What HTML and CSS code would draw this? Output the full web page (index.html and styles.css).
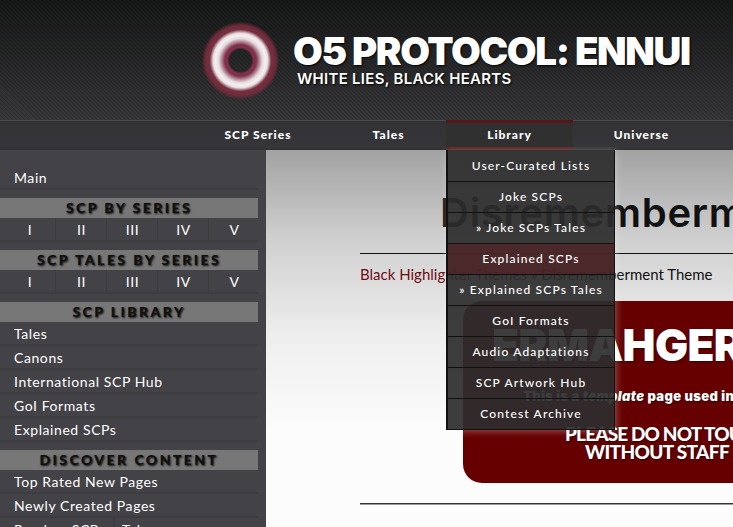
FILE: index.html
```html
<!DOCTYPE html>
<html lang="en">
<head>
<meta charset="utf-8">
<title>O5 Protocol: Ennui</title>
<link rel="stylesheet" href="styles.css">
</head>
<body>
<header class="header">
  <svg class="logo" viewBox="0 0 76 76" aria-hidden="true">
    <defs>
      <radialGradient id="ring" gradientUnits="userSpaceOnUse" cx="38" cy="38" r="38">
        <stop offset=".29" stop-color="#80304a" stop-opacity="0"/>
        <stop offset=".34" stop-color="#80304a"/>
        <stop offset=".41" stop-color="#80304a"/>
        <stop offset=".57" stop-color="#e5dadd"/>
        <stop offset=".65" stop-color="#f3f0f2"/>
        <stop offset=".71" stop-color="#e8dde1"/>
        <stop offset=".80" stop-color="#75303f"/>
        <stop offset=".91" stop-color="#702b3a"/>
        <stop offset="1" stop-color="#702b3a" stop-opacity=".1"/>
      </radialGradient>
    </defs>
    <circle cx="38" cy="38" r="38" fill="url(#ring)"/>
  </svg>
  <div class="brand">
    <h1 class="brand-name">O5 PROTOCOL: ENNUI</h1>
    <p class="brand-sub">WHITE LIES, BLACK HEARTS</p>
  </div>
</header>
<nav class="nav">
  <a class="tab tab-series">SCP Series</a>
  <a class="tab tab-tales">Tales</a>
  <div class="tab tab-library">Library
    <div class="menu">
      <a>User-Curated Lists</a>
      <a>Joke SCPs</a>
      <a>» Joke SCPs Tales</a>
      <a class="active">Explained SCPs</a>
      <a>» Explained SCPs Tales</a>
      <a>GoI Formats</a>
      <a>Audio Adaptations</a>
      <a>SCP Artwork Hub</a>
      <a>Contest Archive</a>
    </div>
  </div>
  <a class="tab tab-universe">Universe</a>
</nav>
<div class="layout">
  <aside class="side">
    <a class="link">Main</a>
    <h2>SCP BY SERIES</h2>
    <div class="series"><a>I</a><a>II</a><a>III</a><a>IV</a><a>V</a></div>
    <h2>SCP TALES BY SERIES</h2>
    <div class="series"><a>I</a><a>II</a><a>III</a><a>IV</a><a>V</a></div>
    <h2>SCP LIBRARY</h2>
    <a class="link">Tales</a>
    <a class="link">Canons</a>
    <a class="link">International SCP Hub</a>
    <a class="link">GoI Formats</a>
    <a class="link">Explained SCPs</a>
    <h2>DISCOVER CONTENT</h2>
    <a class="link">Top Rated New Pages</a>
    <a class="link">Newly Created Pages</a>
    <div class="random"><a>Random SCP</a><a>Tale</a></div>
  </aside>
  <main class="content">
    <h1 class="title">Disrememberment</h1>
    <p class="crumbs"><a>Black Highlighter Themes</a> » Disrememberment Theme</p>
    <section class="notice">
      <div class="shout">ERMAHGERD</div>
      <p class="about">This is a <em>template</em> page used in</p>
      <p class="plea">PLEASE DO NOT TOUCH</p>
      <p class="plea plea-second">WITHOUT STAFF</p>
    </section>
    <hr>
  </main>
</div>
</body>
</html>
```

FILE: styles.css
```css
* { box-sizing: border-box; }
body {
  margin: 0;
  height: 527px;
  overflow: hidden;
  font-family: Lato, "Liberation Sans", sans-serif;
  color: #fff;
}
h1, h2, p { margin: 0; font-weight: inherit; }

.header {
  height: 120px;
  display: flex;
  padding-left: 202px;
  background:
    repeating-linear-gradient(45deg, rgba(0,0,0,.15) 0 1.4px, transparent 1.4px 2.83px),
    linear-gradient(#171818, #38383b);
}
.logo { width: 77px; height: 77px; margin-top: 22px; }
.brand {
  margin-left: 14px;
  padding-top: 30px;
  font-family: Inter, sans-serif;
  white-space: nowrap;
  text-shadow: 1px 1px 2px #000;
}
.brand-name { font-size: 38.5px; line-height: 42px; font-weight: 900; letter-spacing: -1.4px; }
.brand-sub { margin-left: 4px; font-size: 15px; line-height: 13px; font-weight: 600; letter-spacing: .28px; }

.nav {
  height: 30px;
  display: flex;
  padding-left: 185px;
  border-top: 1px solid #4a4a4e;
  background: linear-gradient(#323235, #36363a 90%, #303033);
}
.tab {
  height: 29px;
  line-height: 27px;
  text-align: center;
  font-size: 12px;
  font-weight: 900;
  letter-spacing: 1px;
}
.tab-series { width: 146px; }
.tab-tales { width: 115px; }
.tab-universe { width: 137px; }
.tab-library {
  position: relative;
  width: 127px;
  height: 30px;
  margin-top: -1px;
  line-height: 24px;
  background: #303030;
  border-top: 3px solid #561517;
  border-bottom: 3px solid #5c2023;
}
.menu {
  position: absolute;
  z-index: 2;
  top: 27px;
  left: 0;
  width: 169px;
  background: rgba(44,44,46,.92);
  border: solid #111;
  border-width: 0 1px 0 2px;
  box-shadow: 1px 1px 7px rgba(255,255,255,.35);
  clip-path: inset(-3px -10px -10px -10px);
}
.menu a {
  display: block;
  height: 31px;
  line-height: 30px;
  border-bottom: 1px solid #111;
  font-size: 12px;
  font-weight: 500;
  letter-spacing: 1.15px;
  white-space: nowrap;
}
.menu a:first-child { height: 32px; line-height: 32px; }
.menu .active { background: rgba(85,32,36,.65); }

.layout { display: flex; height: 377px; }
.side {
  flex: 0 0 266px;
  padding: 16px 8px 0 0;
  overflow: hidden;
  background: #434247;
}
.link {
  display: block;
  height: 24px;
  line-height: 23px;
  padding-left: 14px;
  border-bottom: 2px solid #3d3d40;
  font-size: 14px;
  letter-spacing: .58px;
}
.side h2 {
  height: 20px;
  margin-top: 8px;
  line-height: 20px;
  background: #777;
  color: #101010;
  font-size: 14px;
  font-weight: 900;
  letter-spacing: 2.45px;
  text-align: center;
  text-shadow: 1px 1px 2px rgba(0,0,0,.9);
}
.series {
  display: grid;
  grid-template-columns: repeat(5, 51px);
  height: 24px;
  padding-left: 4px;
  border-bottom: 2px solid #3d3d40;
  font-size: 14px;
  line-height: 23px;
  text-align: center;
  letter-spacing: .5px;
}
.series a { padding-left: 1px; }
.series a + a { border-left: 1px solid #3d3d40; }
.random { display: flex; font-size: 14px; line-height: 23px; letter-spacing: .5px; }
.random a:first-child { width: 115px; padding-left: 14px; border-right: 2px solid #3d3d40; }
.random a:last-child { padding-left: 7px; }

.content {
  flex: 1;
  min-width: 0;
  padding-left: 94px;
  overflow: hidden;
  white-space: nowrap;
  background: linear-gradient(#a2a2a2, #d0d0d0 90px, #efefef 190px, #fcfcfc 280px);
  color: #111;
}
.title {
  height: 104px;
  padding: 38px 0 0 80px;
  border-bottom: 1px solid #111;
  font-family: Inter, sans-serif;
  font-size: 40px;
  line-height: 50px;
  font-weight: 600;
  letter-spacing: .75px;
}
.crumbs { height: 47px; padding-top: 9px; font-size: 15px; line-height: 22px; }
.crumbs a { color: #700a14; }
.notice {
  width: 500px;
  height: 182px;
  margin-left: 103px;
  padding-top: 19px;
  border-radius: 19px;
  background: #600;
  color: #fff;
  font-family: Inter, sans-serif;
  text-shadow: 1px 1px 2px rgba(0,0,0,.6);
}
.shout { padding-left: 29px; font-size: 44px; line-height: 50px; font-weight: 900; letter-spacing: -.7px; }
.about { padding: 16px 0 0 60px; font-size: 13px; line-height: 20px; font-weight: 900; letter-spacing: .38px; }
.plea {
  padding: 19px 0 0 102px;
  font-family: Lato, sans-serif;
  font-size: 19px;
  line-height: 18px;
  font-weight: 900;
  letter-spacing: -.85px;
}
.plea-second { padding: 0 0 0 122px; letter-spacing: -.65px; }
hr { height: 2px; margin: 20px 0 0; border: 0; background: linear-gradient(#333 50%, #999 50%); }
```
